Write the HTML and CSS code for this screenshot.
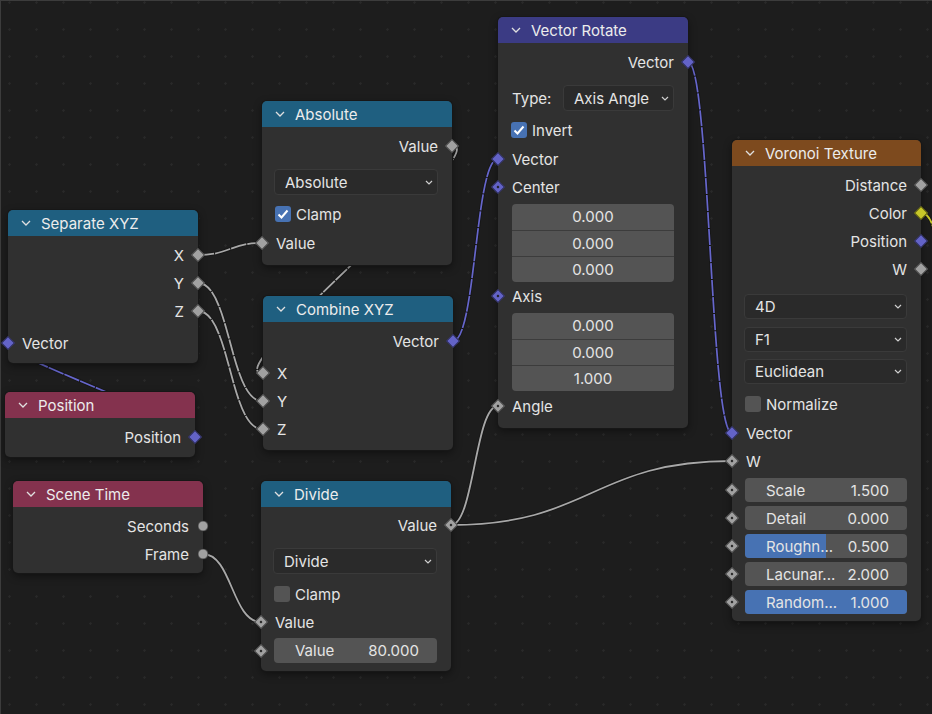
FILE: index.html
```html
<!DOCTYPE html>
<html lang="en">
<head>
    <meta charset="UTF-8">
    <title>Node Editor</title>
    <link rel="stylesheet" href="styles.css">
</head>
<body>
    <div class="editor">
        <!-- wires are drawn under the nodes -->
        <svg class="wires" width="932" height="714" viewBox="0 0 932 714">
            <g class="under">
                <path d="M198,255 C230,255 230,243 262,243"/>
                <path d="M198,283 C230,283 230,401 262,401"/>
                <path d="M198,311 C230,311 230,429 262,429"/>
                <path d="M452,146 C497,146 217,373 262,373"/>
                <path d="M195,437 C232,437 -29,343 8,343"/>
                <path d="M453,341 C476,341 475,159 498,159"/>
                <path d="M688,62 C710,62 710,433 732,433"/>
                <path d="M451,525 C474,525 475,406 498,406"/>
                <path d="M451,525 C591,525 592,461 732,461"/>
                <path d="M203,554 C232,554 232,622 261,622"/>
                <path d="M921,213 C934,213 936,240 940,270"/>
            </g>
            <g class="gray field">
                <path d="M198,255 C230,255 230,243 262,243"/>
                <path d="M198,283 C230,283 230,401 262,401"/>
                <path d="M198,311 C230,311 230,429 262,429"/>
                <path d="M452,146 C497,146 217,373 262,373"/>
            </g>
            <g class="vector field">
                <path d="M195,437 C232,437 -29,343 8,343"/>
                <path d="M453,341 C476,341 475,159 498,159"/>
                <path d="M688,62 C710,62 710,433 732,433"/>
            </g>
            <g class="gray">
                <path d="M451,525 C474,525 475,406 498,406"/>
                <path d="M451,525 C591,525 592,461 732,461"/>
                <path d="M203,554 C232,554 232,622 261,622"/>
            </g>
            <g class="color field">
                <path d="M921,213 C934,213 936,240 940,270"/>
            </g>
        </svg>

        <!-- Separate XYZ -->
        <div class="node" style="left:8px; top:210px;">
            <div class="head converter">
                <svg viewBox="0 0 10 6"><polyline points="1,1 5,5 9,1"/></svg>
                <span>Separate XYZ</span>
            </div>
            <div class="body">
                <div class="row out">X<i class="sock"></i></div>
                <div class="row out">Y<i class="sock"></i></div>
                <div class="row out">Z<i class="sock"></i></div>
                <div class="row in gap"><i class="sock vec"></i>Vector</div>
            </div>
        </div>

        <!-- Position -->
        <div class="node" style="left:5px; top:392px;">
            <div class="head input">
                <svg viewBox="0 0 10 6"><polyline points="1,1 5,5 9,1"/></svg>
                <span>Position</span>
            </div>
            <div class="body">
                <div class="row out">Position<i class="sock vec"></i></div>
            </div>
        </div>

        <!-- Absolute -->
        <div class="node" style="left:262px; top:101px;">
            <div class="head converter">
                <svg viewBox="0 0 10 6"><polyline points="1,1 5,5 9,1"/></svg>
                <span>Absolute</span>
            </div>
            <div class="body pb8">
                <div class="row out">Value<i class="sock"></i></div>
                <div class="select mt9"><span>Absolute</span><svg viewBox="0 0 8 5"><polyline points="1,1 4,4 7,1"/></svg></div>
                <div class="check mt5"><b class="box on"><svg viewBox="0 0 16 16"><polyline points="3.5,8.5 6.5,11.5 12.5,4.5"/></svg></b>Clamp</div>
                <div class="row in mt1"><i class="sock"></i>Value</div>
            </div>
        </div>

        <!-- Combine XYZ -->
        <div class="node" style="left:263px; top:296px;">
            <div class="head converter">
                <svg viewBox="0 0 10 6"><polyline points="1,1 5,5 9,1"/></svg>
                <span>Combine XYZ</span>
            </div>
            <div class="body pb7">
                <div class="row out">Vector<i class="sock vec"></i></div>
                <div class="row in gap"><i class="sock"></i>X</div>
                <div class="row in"><i class="sock"></i>Y</div>
                <div class="row in"><i class="sock"></i>Z</div>
            </div>
        </div>

        <!-- Vector Rotate -->
        <div class="node" style="left:498px; top:17px;">
            <div class="head vector">
                <svg viewBox="0 0 10 6"><polyline points="1,1 5,5 9,1"/></svg>
                <span>Vector Rotate</span>
            </div>
            <div class="body pb8">
                <div class="row out">Vector<i class="sock vec"></i></div>
                <div class="type mt9">
                    <span>Type:</span>
                    <div class="select short"><span>Axis Angle</span><svg viewBox="0 0 8 5"><polyline points="1,1 4,4 7,1"/></svg></div>
                </div>
                <div class="check mt5"><b class="box on"><svg viewBox="0 0 16 16"><polyline points="3.5,8.5 6.5,11.5 12.5,4.5"/></svg></b>Invert</div>
                <div class="row in mt1"><i class="sock vec"></i>Vector</div>
                <div class="row in"><i class="sock vec dot"></i>Center</div>
                <div class="group">
                    <div>0.000</div>
                    <div>0.000</div>
                    <div>0.000</div>
                </div>
                <div class="row in"><i class="sock vec dot"></i>Axis</div>
                <div class="group">
                    <div>0.000</div>
                    <div>0.000</div>
                    <div>1.000</div>
                </div>
                <div class="row in mt1"><i class="sock dot"></i>Angle</div>
            </div>
        </div>

        <!-- Voronoi Texture -->
        <div class="node" style="left:732px; top:140px; width:189px;">
            <div class="head texture">
                <svg viewBox="0 0 10 6"><polyline points="1,1 5,5 9,1"/></svg>
                <span>Voronoi Texture</span>
            </div>
            <div class="body pb7">
                <div class="row out">Distance<i class="sock"></i></div>
                <div class="row out">Color<i class="sock col"></i></div>
                <div class="row out">Position<i class="sock vec"></i></div>
                <div class="row out">W<i class="sock"></i></div>
                <div class="select slim mt11"><span>4D</span><svg viewBox="0 0 8 5"><polyline points="1,1 4,4 7,1"/></svg></div>
                <div class="select slim mt8"><span>F1</span><svg viewBox="0 0 8 5"><polyline points="1,1 4,4 7,1"/></svg></div>
                <div class="select slim mt7"><span>Euclidean</span><svg viewBox="0 0 8 5"><polyline points="1,1 4,4 7,1"/></svg></div>
                <div class="check mt6"><b class="box"></b>Normalize</div>
                <div class="row in mt1"><i class="sock vec"></i>Vector</div>
                <div class="row in"><i class="sock dot"></i>W</div>
                <div class="frow mt3"><i class="sock dot"></i><div class="field"><span>Scale</span><span>1.500</span></div></div>
                <div class="frow"><i class="sock dot"></i><div class="field"><span>Detail</span><span>0.000</span></div></div>
                <div class="frow"><i class="sock dot"></i><div class="field"><b class="fill" style="width:50%"></b><span>Roughn...</span><span>0.500</span></div></div>
                <div class="frow"><i class="sock dot"></i><div class="field"><span>Lacunar...</span><span>2.000</span></div></div>
                <div class="frow"><i class="sock dot"></i><div class="field"><b class="fill" style="width:100%"></b><span>Random...</span><span>1.000</span></div></div>
            </div>
        </div>

        <!-- Scene Time -->
        <div class="node" style="left:13px; top:481px;">
            <div class="head input">
                <svg viewBox="0 0 10 6"><polyline points="1,1 5,5 9,1"/></svg>
                <span>Scene Time</span>
            </div>
            <div class="body pb5">
                <div class="row out">Seconds<i class="sock round"></i></div>
                <div class="row out">Frame<i class="sock round"></i></div>
            </div>
        </div>

        <!-- Divide -->
        <div class="node" style="left:261px; top:481px;">
            <div class="head converter">
                <svg viewBox="0 0 10 6"><polyline points="1,1 5,5 9,1"/></svg>
                <span>Divide</span>
            </div>
            <div class="body pt4 pb8">
                <div class="row out">Value<i class="sock dot"></i></div>
                <div class="select mt9"><span>Divide</span><svg viewBox="0 0 8 5"><polyline points="1,1 4,4 7,1"/></svg></div>
                <div class="check mt6"><b class="box"></b>Clamp</div>
                <div class="row in"><i class="sock dot"></i>Value</div>
                <div class="frow tall mt2"><i class="sock dot"></i><div class="field"><span>Value</span><span>80.000</span></div></div>
            </div>
        </div>
    </div>
</body>
</html>
```

FILE: styles.css
```css
body {
    margin: 0;
    background: #1d1d1d;
    font-family: Inter, "Noto Sans", sans-serif;
    font-size: 15px;
    color: #e4e4e4;
}
.editor {
    position: relative;
    width: 932px;
    height: 714px;
    overflow: hidden;
    background-color: #1d1d1d;
    background-image: radial-gradient(circle, #292929 0.9px, transparent 1.5px);
    background-size: 27px 27px;
    background-position: -4px -11px;
    box-shadow: inset 1px 1px 0 #3c3c3c;
}
.wires {
    position: absolute;
    left: 0;
    top: 0;
}
.wires path {
    fill: none;
}
.wires .under path {
    stroke: #141414;
    stroke-width: 3.5;
    opacity: 0.7;
}
.wires .gray path {
    stroke: #a8a8a8;
    stroke-width: 1.8;
}
.wires .vector path {
    stroke: #6666cc;
    stroke-width: 1.7;
}
.wires .color path {
    stroke: #c8c82a;
    stroke-width: 1.8;
}
.wires .field path {
    stroke-dasharray: 16 1;
}

.node {
    position: absolute;
    width: 190px;
    background: #303030;
    border-radius: 5px;
    box-shadow: 0 0 0 1px #171717, 0 3px 8px rgba(0, 0, 0, 0.45);
}
.head {
    height: 26px;
    border-radius: 5px 5px 0 0;
    display: flex;
    align-items: center;
    padding-left: 13px;
    gap: 10px;
    color: #ececec;
}
.head svg {
    width: 10px;
    height: 6px;
    fill: none;
    stroke: #e0e0e0;
    stroke-width: 1.3;
}
.converter { background: #1f5f80; }
.input { background: #84324e; }
.vector { background: #3b3b84; }
.texture { background: #7d4a1e; }

.body {
    padding: 5px 0 6px;
}

.row {
    position: relative;
    height: 28px;
    display: flex;
    align-items: center;
    padding: 0 14px;
}
.row.out {
    justify-content: flex-end;
}
.row.gap {
    margin-top: 4px;
}

.sock {
    position: absolute;
    top: 50%;
    left: 0;
    width: 8px;
    height: 8px;
    background: #a1a1a1;
    border: 1px solid rgba(0, 0, 0, 0.55);
    transform: translate(-50%, -50%) rotate(45deg);
}
.out .sock {
    left: 100%;
}
.sock.vec { background: #6363c7; }
.sock.col { background: #c7c729; }
.sock.dot::after {
    content: "";
    position: absolute;
    left: 3px;
    top: 3px;
    width: 2px;
    height: 2px;
    background: #1a1a1a;
}
.sock.round {
    width: 9px;
    height: 9px;
    border-radius: 50%;
    transform: translate(-50%, -50%);
}

.select {
    height: 26px;
    margin: 0 14px 0 12px;
    box-sizing: border-box;
    background: #2a2a2a;
    border: 1px solid #3a3a3a;
    border-radius: 4px;
    display: flex;
    align-items: center;
    justify-content: space-between;
    padding: 0 4px 0 10px;
}
.select.slim {
    height: 25px;
}
.select svg {
    width: 8px;
    height: 5px;
    fill: none;
    stroke: #cfcfcf;
    stroke-width: 1.2;
}
.type {
    display: flex;
    align-items: center;
    padding-left: 14px;
}
.type .select.short {
    width: 111px;
    margin: 0 14px 0 auto;
}

.check {
    height: 28px;
    display: flex;
    align-items: center;
    gap: 5px;
    padding-left: 13px;
}
.box {
    width: 16px;
    height: 16px;
    border-radius: 3px;
    background: #545454;
    display: flex;
}
.box.on {
    background: #4772b3;
}
.box svg {
    width: 16px;
    height: 16px;
    fill: none;
    stroke: #ffffff;
    stroke-width: 2;
}

.group {
    margin: 3px 14px 0 14px;
    border-radius: 4px;
    overflow: hidden;
}
.group div {
    height: 25px;
    line-height: 25px;
    text-align: center;
    background: #545454;
    border-top: 1px solid #3c3c3c;
}
.group div:first-child {
    height: 26px;
    border-top: none;
}

.frow {
    position: relative;
    height: 24px;
    margin-top: 4px;
}
.frow.tall {
    height: 25px;
}
.field {
    position: relative;
    height: 100%;
    margin: 0 14px 0 13px;
    background: #545454;
    border-radius: 4px;
    overflow: hidden;
    display: flex;
    align-items: center;
    justify-content: space-between;
    padding: 0 18px 0 21px;
}
.field span {
    position: relative;
}
.fill {
    position: absolute;
    left: 0;
    top: 0;
    bottom: 0;
    background: #4772b3;
}

/* spacing helpers, kept last so they win */
.pt4 { padding-top: 4px; }
.pb5 { padding-bottom: 5px; }
.pb7 { padding-bottom: 7px; }
.pb8 { padding-bottom: 8px; }
.mt1 { margin-top: 1px; }
.mt2 { margin-top: 2px; }
.mt3 { margin-top: 3px; }
.mt5 { margin-top: 5px; }
.mt6 { margin-top: 6px; }
.mt7 { margin-top: 7px; }
.mt8 { margin-top: 8px; }
.mt9 { margin-top: 9px; }
.mt11 { margin-top: 11px; }
```
